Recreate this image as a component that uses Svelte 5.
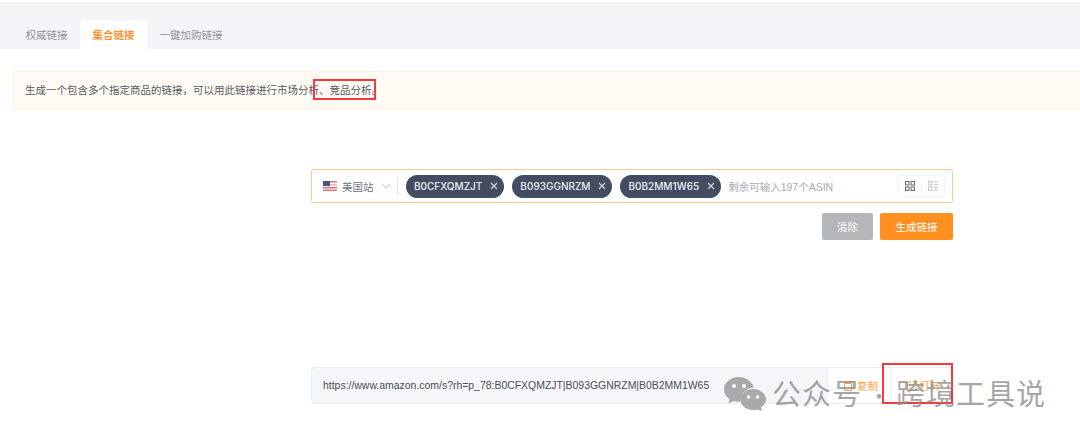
<script>
  const tabs = ["权威链接", "集合链接", "一键加购链接"];
  const asins = ["B0CFXQMZJT", "B093GGNRZM", "B0B2MM1W65"];
  const link = "https://www.amazon.com/s?rh=p_78:" + asins.join("|");
</script>

<main class="page">
  <nav class="tabs">
    {#each tabs as tab, i}
      <span class="tab" class:active={i === 1}>{tab}</span>
    {/each}
  </nav>

  <p class="notice">
    生成一个包含多个指定商品的链接，可以用此链接进行市场分析、竞品分析。
    <i class="mark mark-text"></i>
  </p>

  <section class="form">
    <div class="asin-input">
      <div class="site">
        <svg class="flag" viewBox="0 0 14 10" width="14" height="10">
          <rect width="14" height="10" fill="#f4f4f6" />
          <rect y="0" width="14" height="1.4" fill="#d9707c" />
          <rect y="3" width="14" height="1.4" fill="#e9b4ba" />
          <rect y="6" width="14" height="1.4" fill="#d9707c" />
          <rect y="8.6" width="14" height="1.4" fill="#d9707c" />
          <rect width="7" height="5" fill="#4a5578" />
        </svg>
        <span>美国站</span>
        <svg class="caret" viewBox="0 0 10 6" width="10" height="6">
          <path d="M1 1l4 4 4-4" fill="none" stroke="#c6c8cd" stroke-width="1" />
        </svg>
      </div>
      {#each asins as asin}
        <span class="chip">
          {asin}
          <svg viewBox="0 0 8 8" width="8" height="8">
            <path d="M1 1l6 6M7 1L1 7" stroke="#d5d8df" stroke-width="1.1" />
          </svg>
        </span>
      {/each}
      <span class="hint">剩余可输入197个ASIN</span>
      <div class="views">
        <svg viewBox="0 0 10 10" width="10" height="10">
          <g fill="none" stroke="#666a73" stroke-width="1">
            <rect x="0.5" y="0.5" width="3.5" height="3.5" />
            <rect x="6" y="0.5" width="3.5" height="3.5" />
            <rect x="0.5" y="6" width="3.5" height="3.5" />
            <rect x="6" y="6" width="3.5" height="3.5" />
          </g>
        </svg>
        <i></i>
        <svg viewBox="0 0 10 10" width="10" height="10">
          <g fill="none" stroke="#c4c7cd" stroke-width="1">
            <rect x="0.5" y="0.5" width="3.5" height="3.5" />
            <rect x="0.5" y="6" width="3.5" height="3.5" />
            <path d="M6 1h4M6 3.5h4M6 6.5h4M6 9h4" />
          </g>
        </svg>
      </div>
    </div>

    <div class="actions">
      <button class="clear">清除</button>
      <button class="generate">生成链接</button>
    </div>
  </section>

  <section class="result">
    <div class="url">{link}</div>
    <button class="link-btn copy">
      <svg viewBox="0 0 10 10" width="10" height="10">
        <path d="M2.5 2.5V.5h7v7h-2M.5 2.5h7v7h-7z" fill="none" stroke="#ff9a45" />
      </svg>
      复制
    </button>
    <button class="link-btn open">
      <svg viewBox="0 0 10 10" width="10" height="10">
        <path d="M4 1H.5v8.500h8.500V6M5 5l4.500-4.500M6 .5h3.500V4" fill="none" stroke="#ff9a45" />
      </svg>
      打开
    </button>
    <i class="mark mark-open"></i>
  </section>

  <div class="watermark">
    <svg viewBox="0 0 42 34" width="42" height="34">
      <path d="M15 0C6.700 0 0 5.600 0 12.500c0 3.900 2.200 7.400 5.500 9.700L4.500 26.500l5-2.600c1.700.5 3.500.800 5.500.800l1.500-.1C15.600 17 22 11 29.800 10.500 27.900 4.500 22 0 15 0z" fill="#a9a9a9" />
      <path d="M29 12c-7 0-12.700 4.700-12.700 10.500S22 33 29 33c1.500 0 3-.2 4.300-.6l4.700 1.600-1-3.800c3-1.900 5-4.700 5-7.700C42 16.700 36 12 29 12z" fill="#a9a9a9" />
      <circle cx="10" cy="9" r="2" fill="#fff" />
      <circle cx="20" cy="9" r="2" fill="#fff" />
      <circle cx="24.500" cy="20" r="1.800" fill="#fff" />
      <circle cx="33.500" cy="20" r="1.800" fill="#fff" />
    </svg>
    <span class="wm-text">公众号</span>
    <span class="wm-dot">·</span>
    <span class="wm-text">跨境工具说</span>
  </div>
</main>

<style>
  :global(body) {
    margin: 0;
    background: #fff;
  }

  .page {
    position: relative;
    height: 436px;
    overflow: hidden;
    padding-top: 2px;
    box-sizing: border-box;
    font-family: "Liberation Sans", "Noto Sans CJK SC", sans-serif;
    font-size: 10.5px;
    color: #555a64;
  }

  .tabs {
    display: flex;
    height: 47px;
    padding: 19px 0 0 13px;
    box-sizing: border-box;
    background: #f4f5f8;
  }

  .tab {
    padding: 0 12.5px;
    line-height: 28px;
    color: #8e929b;
  }

  .tab.active {
    background: #fff;
    border-radius: 3px 3px 0 0;
    color: #ff8f2f;
    font-weight: 700;
  }

  .notice {
    position: relative;
    margin: 22px 0 0 13px;
    height: 38px;
    padding-left: 11px;
    line-height: 37px;
    background: #fffaf3;
    border: 1px solid #fdf0dd;
    border-right: 0;
    border-radius: 2px 0 0 2px;
    box-sizing: border-box;
  }

  .mark {
    position: absolute;
    border: 2px solid #f53a3f;
    box-sizing: border-box;
  }

  .mark-text {
    left: 299px;
    top: 7px;
    width: 63px;
    height: 21px;
  }

  .form {
    width: 642px;
    margin: 60px 0 0 311px;
  }

  .asin-input {
    display: flex;
    align-items: center;
    height: 34px;
    padding: 0 7px 0 11px;
    border: 1px solid #ffc78f;
    border-radius: 3px;
    box-sizing: border-box;
  }

  .site {
    display: flex;
    align-items: center;
    gap: 5px;
    width: 75px;
    height: 18px;
    color: #71757e;
    border-right: 1px solid #e6e7ea;
    box-sizing: border-box;
    margin-right: 8px;
    flex-shrink: 0;
  }

  .caret {
    margin-left: 2px;
  }

  .chip {
    display: flex;
    align-items: center;
    gap: 8px;
    height: 23px;
    padding: 0 6px 0 8px;
    margin-right: 8px;
    background: #434c60;
    border-radius: 11.500px;
    color: #e8ecf4;
    font-family: Inter, "Liberation Sans", sans-serif;
    font-size: 10px;
    font-weight: 500;
    white-space: nowrap;
  }

  .hint {
    flex: 1;
    margin-left: -1px;
    color: #a8abb2;
    white-space: nowrap;
  }

  .views {
    display: flex;
    align-items: center;
    gap: 6px;
    height: 20px;
    padding: 0 6px 0 7px;
    border: 1px solid #f2f3f5;
    border-radius: 3px;
  }

  .views i {
    width: 1px;
    height: 10px;
    background: #eceef0;
  }

  .actions {
    display: flex;
    justify-content: flex-end;
    gap: 7px;
    margin-top: 10px;
  }

  button {
    height: 27px;
    border: 0;
    border-radius: 2px;
    padding: 0;
    font: inherit;
    color: #fff;
  }

  .clear {
    width: 51px;
    background: #b4b6ba;
  }

  .generate {
    width: 73px;
    background: #ff8f1f;
  }

  .result {
    position: relative;
    display: flex;
    width: 642px;
    height: 37px;
    margin: 127px 0 0 311px;
  }

  .url {
    flex: 1;
    padding-left: 11px;
    line-height: 35px;
    background: #f5f6fa;
    border: 1px solid #eceef3;
    border-radius: 3px 0 0 3px;
    font-size: 10.450px;
    color: #4a4e57;
    white-space: nowrap;
  }

  .link-btn {
    display: flex;
    align-items: center;
    justify-content: center;
    gap: 3px;
    height: 37px;
    padding-left: 4px;
    background: #fff;
    border: 1px solid #eceef3;
    border-left: 0;
    border-radius: 0;
    color: #ff9a45;
  }

  .copy {
    width: 63px;
  }

  .open {
    width: 62px;
  }

  .mark-open {
    right: 0;
    top: -4px;
    width: 71px;
    height: 41px;
  }

  .watermark {
    position: absolute;
    left: 724px;
    top: 371px;
    display: flex;
    align-items: center;
    color: rgba(140, 140, 140, 0.78);
    font-family: "Noto Sans CJK SC", sans-serif;
    white-space: nowrap;
  }

  .watermark svg {
    margin-right: 6px;
  }

  .wm-text {
    padding-bottom: 3px;
    font-size: 29px;
    letter-spacing: 1px;
  }

  .wm-dot {
    width: 34px;
    text-align: center;
    font-size: 22px;
  }
</style>
